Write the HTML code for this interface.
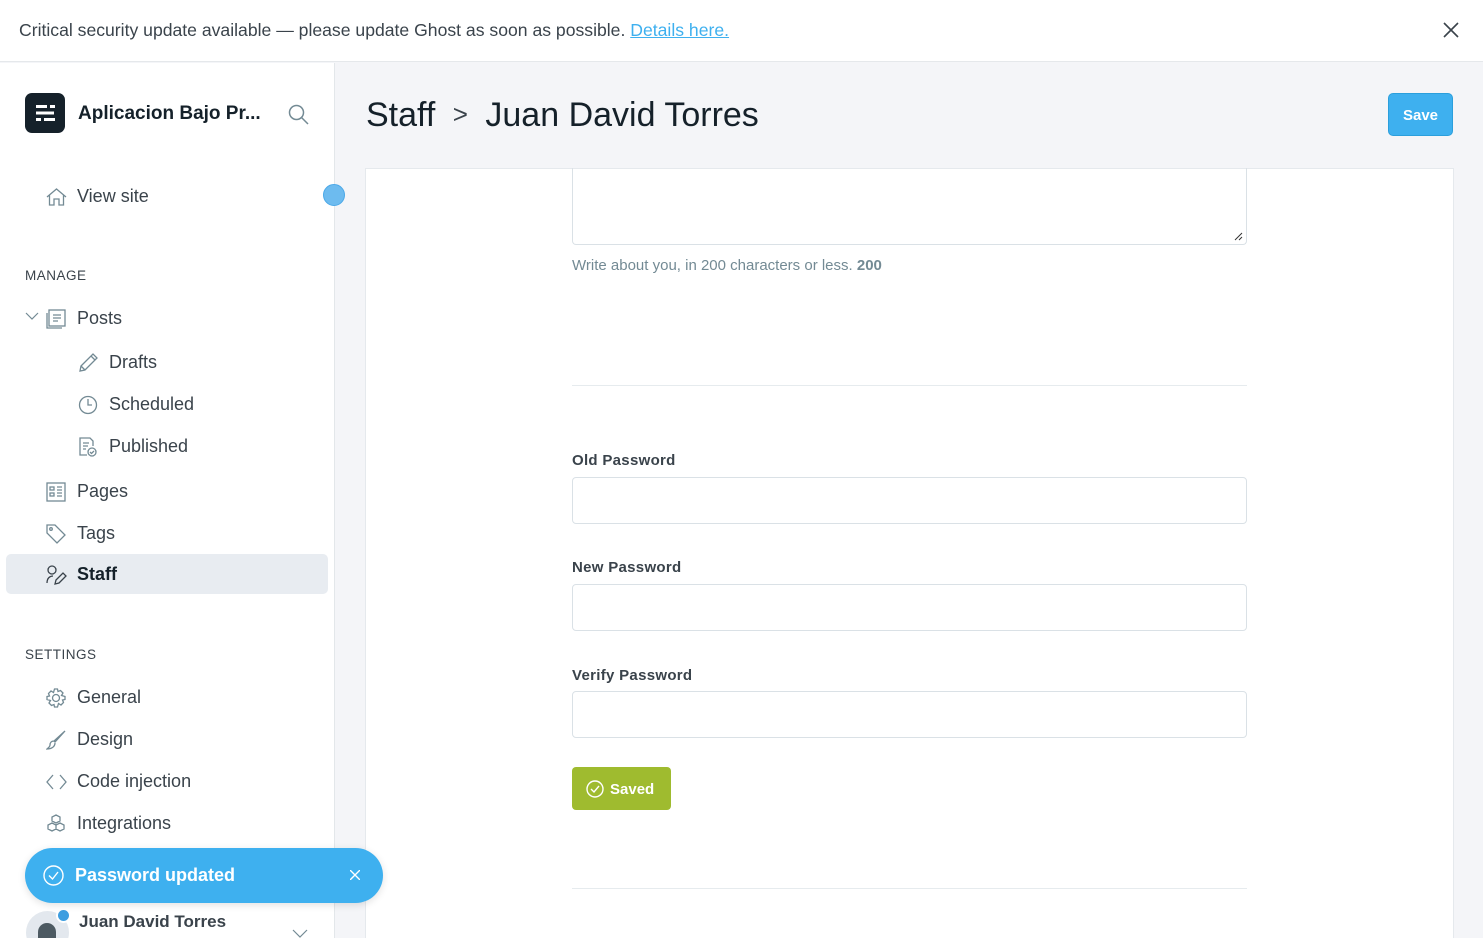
<!DOCTYPE html>
<html><head><meta charset="utf-8"><style>
*{box-sizing:border-box;margin:0;padding:0}
html,body{width:1483px;height:938px;overflow:hidden}
body{font-family:"Liberation Sans",sans-serif;background:#f4f5f8;position:relative;color:#15212a}
.banner{position:absolute;left:0;top:0;width:1483px;height:62px;background:#fff;border-bottom:1px solid #e5e8eb;font-size:17.6px;color:#3a434b;padding:20px 19px}
.banner a{color:#3eb0ef;text-decoration:underline}
.side{position:absolute;left:0;top:63px;width:335px;height:875px;background:#fff;border-right:1px solid #e3e7ea;overflow:hidden}
.logo{position:absolute;left:25px;top:30px;width:40px;height:40px;background:#15212a;border-radius:7px}
.title{position:absolute;left:78px;top:40px;font-weight:bold;font-size:19px;color:#15212a}
.item{position:absolute;font-size:18px;color:#3a434b;display:flex;align-items:center}
.item svg{position:absolute;left:-31px}
.sec{position:absolute;left:25px;font-size:13.5px;color:#3a434b;letter-spacing:.5px}
.main h1{position:absolute;left:366px;top:96px;font-size:34px;font-weight:normal;color:#15212a}
.save{position:absolute;left:1388px;top:93px;width:65px;height:43px;background:#3eb0ef;border-radius:5px;color:#fff;font-weight:bold;font-size:15px;text-align:center;line-height:43px;border:1px solid #2b9fdc}
.card{position:absolute;left:365px;top:168px;width:1089px;height:770px;background:#fff;border:1px solid #e5e9ed;border-bottom:none}
.ta{position:absolute;left:572px;top:168px;width:675px;height:77px;border:1px solid #dae1e6;border-top:none;border-radius:0 0 4px 4px}
.hint{position:absolute;left:572px;top:257px;font-size:15px;color:#738a94}
.hr{position:absolute;left:572px;width:675px;height:1px;background:#e6ebee}
.lbl{position:absolute;left:572px;font-size:15px;font-weight:bold;color:#3a434b;letter-spacing:.3px}
.inp{position:absolute;left:572px;width:675px;height:47px;border:1px solid #dae1e6;border-radius:4px;background:#fff}
.saved{position:absolute;left:572px;top:767px;width:99px;height:43px;background:#9fbb2f;border-radius:4px;color:#fff;font-weight:bold;font-size:15px;padding:14px 0 0 38px}
.toast{position:absolute;left:25px;top:848px;width:358px;height:55px;background:#3eb0ef;border-radius:28px;box-shadow:0 2px 8px rgba(0,0,0,.12);color:#fff;font-weight:bold;font-size:18px;padding:17px 0 0 50px}
</style></head><body>
<div class="banner">Critical security update available — please update Ghost as soon as possible. <a>Details here.</a>
<svg style="position:absolute;left:1443px;top:22px" width="16" height="16" viewBox="0 0 16 16"><path d="M1 1L15 15M15 1L1 15" stroke="#3a434b" stroke-width="1.6"/></svg></div>
<div class="side">
<div class="logo"><svg width="40" height="40" viewBox="0 0 40 40" fill="#fff"><rect x="11" y="12" width="11" height="3"/><rect x="25" y="12" width="5" height="3"/><rect x="11" y="18.5" width="18" height="3"/><rect x="11" y="25" width="5" height="3"/><rect x="19" y="25" width="11" height="3"/></svg></div>
<div class="title">Aplicacion Bajo Pr...</div>
<svg style="position:absolute;left:288px;top:41px" width="21" height="21" viewBox="0 0 21 21" fill="none" stroke="#738a94" stroke-width="1.5"><circle cx="8.5" cy="8.5" r="7"/><path d="M13.5 13.5L20 20"/></svg>
<div class="item" style="left:77px;top:123px"><svg width="21" height="20" viewBox="0 0 21 20" fill="none" stroke="#738a94" stroke-width="1.3"><path d="M1 10L10.5 2L20 10M3.5 8V18H8V12H13V18H17.5V8"/></svg>View site</div>
<div class="sec" style="top:205px">MANAGE</div>
<svg style="position:absolute;left:25px;top:249px" width="14" height="9" viewBox="0 0 14 9" fill="none" stroke="#738a94" stroke-width="1.2"><path d="M1 1L7 7L13 1"/></svg>
<div class="item" style="left:77px;top:245px"><svg width="20" height="20" viewBox="0 0 20 20" fill="none" stroke="#738a94" stroke-width="1.3"><rect x="3" y="1" width="16" height="16"/><path d="M1 4V19H16M7 6H15M7 9H15M7 12H12"/></svg>Posts</div>
<div class="item" style="left:109px;top:289px"><svg width="20" height="20" viewBox="0 0 20 20" fill="none" stroke="#738a94" stroke-width="1.3"><path d="M2 18L3 13L15 1L19 5L7 17ZM13 3L17 7M3 13L7 17"/></svg>Drafts</div>
<div class="item" style="left:109px;top:331px"><svg width="20" height="20" viewBox="0 0 20 20" fill="none" stroke="#738a94" stroke-width="1.3"><circle cx="10" cy="10" r="8.5"/><path d="M10 4V10H14"/></svg>Scheduled</div>
<div class="item" style="left:109px;top:373px"><svg width="20" height="20" viewBox="0 0 20 20" fill="none" stroke="#738a94" stroke-width="1.3"><path d="M9 18H2V1H12L15 4V9M5 6H11M5 9H10M5 12H8"/><circle cx="14" cy="15" r="4"/><path d="M12 15L13.5 16.5L16 14"/></svg>Published</div>
<div class="item" style="left:77px;top:418px"><svg width="20" height="20" viewBox="0 0 20 20" fill="none" stroke="#738a94" stroke-width="1.3"><rect x="1" y="1" width="18" height="18"/><rect x="4" y="5" width="4" height="3"/><rect x="4" y="11" width="4" height="3"/><path d="M11 5H16M11 8H16M11 11H16M11 14H16"/></svg>Pages</div>
<div class="item" style="left:77px;top:460px"><svg width="20" height="20" viewBox="0 0 20 20" fill="none" stroke="#738a94" stroke-width="1.3"><path d="M1 1H9L19 11L11 19L1 9Z"/><circle cx="5" cy="5" r="1.3"/></svg>Tags</div>
<div style="position:absolute;left:6px;top:491px;width:322px;height:40px;background:#e8ecf1;border-radius:5px"></div>
<div class="item" style="left:77px;top:501px;font-weight:bold;color:#15212a"><svg width="21" height="20" viewBox="0 0 21 20" fill="none" stroke="#3a434b" stroke-width="1.3"><circle cx="6" cy="5" r="4"/><path d="M1 18C1 13 4 11 7 11M9 19L10 15L17 8L20 11L13 18Z"/></svg>Staff</div>
<div class="sec" style="top:584px">SETTINGS</div>
<div class="item" style="left:77px;top:624px"><svg width="20" height="20" viewBox="0 0 20 20" fill="none" stroke="#738a94" stroke-width="1.3"><circle cx="10" cy="10" r="3.5"/><path d="M8.5 1H11.5L12 3.5L14.5 2.5L17 5L15.5 7.5L19 8.5V11.5L16.5 12L17.5 14.5L15 17L12.5 15.5L11.5 19H8.5L8 16.5L5.5 17.5L3 15L4.5 12.5L1 11.5V8.5L3.5 8L2.5 5.5L5 3L7.5 4.5Z"/></svg>General</div>
<div class="item" style="left:77px;top:666px"><svg width="20" height="20" viewBox="0 0 20 20" fill="none" stroke="#738a94" stroke-width="1.3"><path d="M19 1L9 12L8 11ZM8 11C5 11 4 13 4 15C4 17 2 18 1 19C5 19 9 17 9 13"/></svg>Design</div>
<div class="item" style="left:77px;top:708px"><svg width="21" height="20" viewBox="0 0 21 20" fill="none" stroke="#738a94" stroke-width="1.3"><path d="M7 3L1 10L7 17M14 3L20 10L14 17"/></svg>Code injection</div>
<div class="item" style="left:77px;top:750px"><svg width="20" height="20" viewBox="0 0 20 20" fill="none" stroke="#738a94" stroke-width="1.3"><path d="M10 1L14 3V7L10 9L6 7V3ZM6 9L10 11V15L6 17L2 15V11ZM14 9L18 11V15L14 17L10 15V11Z"/></svg>Integrations</div>
<div style="position:absolute;left:26px;top:848px;width:43px;height:43px;border-radius:50%;background:#e3e8ee;overflow:hidden"><div style="position:absolute;left:12px;top:12px;width:18px;height:30px;border-radius:9px;background:#4d5a62"></div></div>
<div style="position:absolute;left:56px;top:845px;width:15px;height:15px;border-radius:50%;background:#3e9ee0;border:2px solid #fff"></div>
<div style="position:absolute;left:79px;top:849px;font-size:17px;font-weight:bold;color:#3a434b">Juan David Torres</div>
<svg style="position:absolute;left:292px;top:866px" width="16" height="9" viewBox="0 0 16 9" fill="none" stroke="#738a94" stroke-width="1.2"><path d="M1 1L8 8L15 1"/></svg>
</div>
<div style="position:absolute;left:323px;top:184px;width:22px;height:22px;border-radius:50%;background:#6dbbef;border:1px solid #4aa8e8"></div>
<div class="main"><h1>Staff <span style="font-size:26px;color:#3a434b;position:relative;top:-3px;margin:0 8px">&gt;</span> Juan David Torres</h1></div>
<div class="save">Save</div>
<div class="card"></div>
<div class="ta"><svg style="position:absolute;right:3px;bottom:3px" width="9" height="9" viewBox="0 0 9 9" stroke="#333"><path d="M1 8L8 1M5 8L8 5"/></svg></div>
<div class="hint">Write about you, in 200 characters or less. <b>200</b></div>
<div class="hr" style="top:385px"></div>
<div class="lbl" style="top:452px">Old Password</div>
<div class="inp" style="top:477px"></div>
<div class="lbl" style="top:559px">New Password</div>
<div class="inp" style="top:584px"></div>
<div class="lbl" style="top:667px">Verify Password</div>
<div class="inp" style="top:691px"></div>
<div class="saved"><svg style="position:absolute;left:14px;top:13px" width="18" height="18" viewBox="0 0 18 18" fill="none" stroke="#fff" stroke-width="1.4"><circle cx="9" cy="9" r="8"/><path d="M5 9L8 12L13 6"/></svg>Saved</div>
<div class="hr" style="top:888px"></div>
<div class="toast"><svg style="position:absolute;left:18px;top:17px" width="21" height="21" viewBox="0 0 21 21" fill="none" stroke="#fff" stroke-width="1.4"><circle cx="10.5" cy="10.5" r="9.5"/><path d="M6 10.5L9.5 14L15 7"/></svg>Password updated<svg style="position:absolute;left:325px;top:22px" width="10" height="10" viewBox="0 0 10 10" stroke="#fff" stroke-width="1.4"><path d="M0 0L10 10M10 0L0 10"/></svg></div>
</body></html>
